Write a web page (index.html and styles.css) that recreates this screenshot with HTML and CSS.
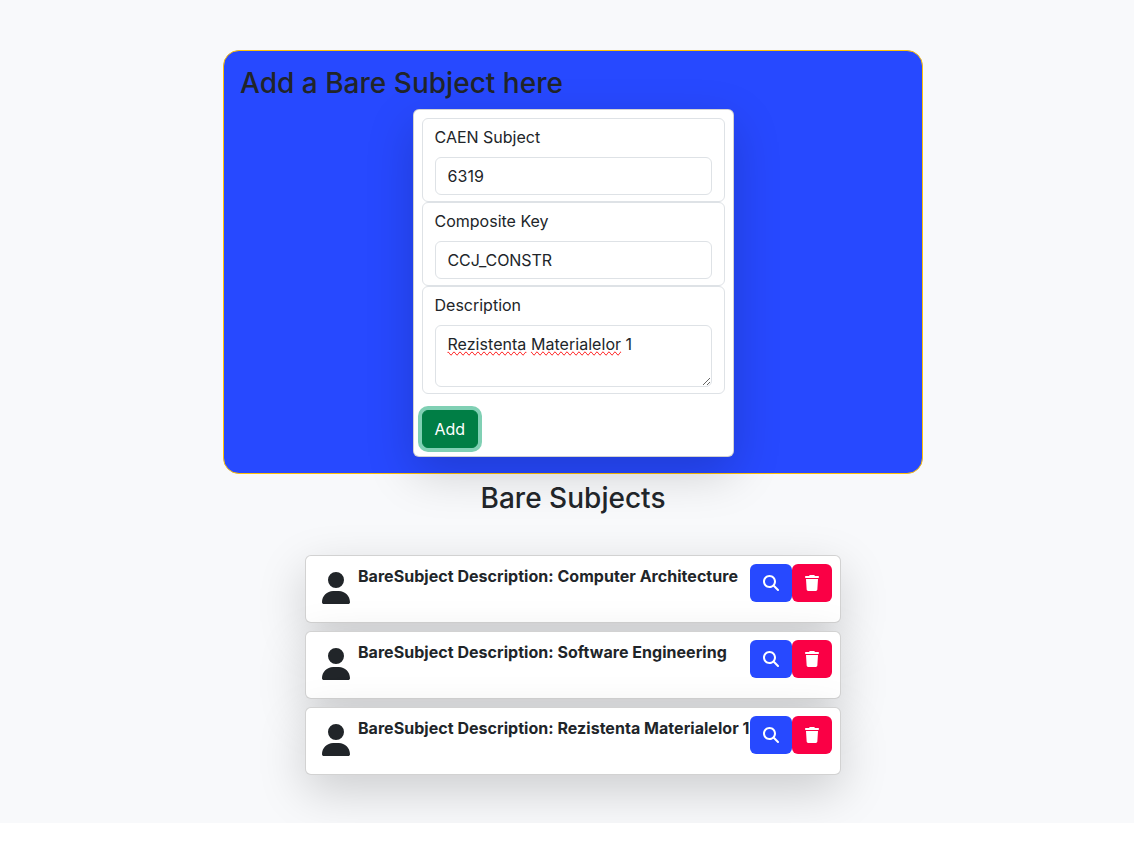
FILE: index.html
```
<!DOCTYPE html>
<html lang="en">
<head>
<meta charset="utf-8">
<title>Bare Subjects</title>
<link rel="stylesheet" href="styles.css">
</head>
<body>
<svg class="sprite" aria-hidden="true">
  <symbol id="user" viewBox="0 0 448 512"><path d="M224 256A128 128 0 1 0 224 0a128 128 0 1 0 0 256zm-45.700 48C79.800 304 0 383.800 0 482.300C0 498.700 13.300 512 29.700 512H418.300c16.400 0 29.700-13.300 29.700-29.700C448 383.800 368.200 304 269.700 304H178.300z"/></symbol>
  <symbol id="search" viewBox="0 0 512 512"><path d="M416 208c0 45.900-14.900 88.300-40 122.700L502.600 457.400c12.500 12.500 12.500 32.800 0 45.300s-32.800 12.500-45.300 0L330.700 376c-34.400 25.200-76.800 40-122.700 40C93.100 416 0 322.900 0 208S93.100 0 208 0S416 93.100 416 208zM208 352a144 144 0 1 0 0-288 144 144 0 1 0 0 288z"/></symbol>
  <symbol id="trash" viewBox="0 0 448 512"><path d="M135.200 17.700L128 32H32C14.300 32 0 46.300 0 64S14.300 96 32 96H416c17.700 0 32-14.300 32-32s-14.300-32-32-32H320l-7.200-14.300C307.400 6.800 296.300 0 284.200 0H163.800c-12.100 0-23.200 6.800-28.600 17.700zM416 128H32L53.200 467c1.600 25.300 22.600 45 47.900 45H346.900c25.300 0 46.300-19.700 47.900-45L416 128z"/></symbol>
</svg>
<main class="page">
  <section class="panel">
    <h3 class="title">Add a Bare Subject here</h3>
    <form class="form-card">
      <div class="field">
        <label class="label" for="caen">CAEN Subject</label>
        <input class="control" id="caen" value="6319">
      </div>
      <div class="field">
        <label class="label" for="key">Composite Key</label>
        <input class="control control-key" id="key" value="CCJ_CONSTR">
      </div>
      <div class="field">
        <div class="label">Description</div>
        <div class="control control-area" role="textbox" aria-multiline="true" contenteditable="true" spellcheck="false"><span class="misspelled">Rezistenta</span> <span class="misspelled">Materialelor</span> 1</div>
      </div>
      <button class="btn btn-add" type="button">Add</button>
    </form>
  </section>
  <h3 class="title list-title">Bare Subjects</h3>
  <section class="list">
    <article class="item">
      <svg class="avatar"><use href="#user"/></svg>
      <strong class="name">BareSubject Description: Computer Architecture</strong>
      <div class="actions">
        <button class="btn btn-view" aria-label="View"><svg class="icon"><use href="#search"/></svg></button>
        <button class="btn btn-delete" aria-label="Delete"><svg class="icon icon-narrow"><use href="#trash"/></svg></button>
      </div>
    </article>
    <article class="item">
      <svg class="avatar"><use href="#user"/></svg>
      <strong class="name">BareSubject Description: Software Engineering</strong>
      <div class="actions">
        <button class="btn btn-view" aria-label="View"><svg class="icon"><use href="#search"/></svg></button>
        <button class="btn btn-delete" aria-label="Delete"><svg class="icon icon-narrow"><use href="#trash"/></svg></button>
      </div>
    </article>
    <article class="item">
      <svg class="avatar"><use href="#user"/></svg>
      <strong class="name">BareSubject Description: Rezistenta Materialelor 1</strong>
      <div class="actions">
        <button class="btn btn-view" aria-label="View"><svg class="icon"><use href="#search"/></svg></button>
        <button class="btn btn-delete" aria-label="Delete"><svg class="icon icon-narrow"><use href="#trash"/></svg></button>
      </div>
    </article>
  </section>
</main>
</body>
</html>
```
FILE: styles.css
```
*, *::before, *::after { box-sizing: border-box; }

body {
  margin: 0;
  background: #fff;
  color: #212529;
  font: 400 16px/1.5 Inter, sans-serif;
}

.sprite { display: none; }

.page {
  display: flex;
  flex-direction: column;
  align-items: center;
  padding: 50px 0 48px 12px;
  background: #f8f9fb;
}

.title {
  margin: 0;
  font-size: 28px;
  font-weight: 500;
  line-height: 1.2;
  letter-spacing: .02px;
}

.panel {
  display: flex;
  flex-direction: column;
  gap: 8px;
  width: 700px;
  padding: 16px;
  border: 1px solid #ffc107;
  border-radius: 16px;
  background: #2749ff;
}

.form-card {
  align-self: center;
  width: 321px;
  padding: 8px;
  border: 1px solid rgba(0, 0, 0, .175);
  border-radius: 6px;
  background: #fff;
  box-shadow: 0 16px 48px rgba(0, 0, 0, .175);
}

.field {
  padding: 6px 12px;
  border: 1px solid #dee2e6;
  border-radius: 6px;
}

.label { display: block; margin-bottom: 8px; }

.control {
  display: block;
  width: 100%;
  height: 38px;
  padding: 6px 12px;
  border: 1px solid #dee2e6;
  border-radius: 6px;
  background: #fff;
  color: #212529;
  font: inherit;
  letter-spacing: .04px;
}

.control-key { letter-spacing: -.08px; }
.control-area { height: 62px; overflow: auto; resize: vertical; }

.misspelled {
  text-decoration: red wavy underline 1px;
  text-decoration-line: spelling-error;
}

.btn {
  height: 38px;
  padding: 6px 12px;
  border: 1px solid transparent;
  border-radius: 6px;
  color: #fff;
  font: inherit;
}

.btn-add {
  display: block;
  margin-top: 16px;
  background: #007e45;
  border-color: #007e45;
  box-shadow: 0 0 0 4px #80d0b4;
}

.list-title { margin: 8px 0 40px; }

.list {
  display: flex;
  flex-direction: column;
  gap: 8px;
  width: 536px;
}

.item {
  position: relative;
  display: flex;
  align-items: flex-start;
  height: 68px;
  padding: 8px;
  border: 1px solid rgba(0, 0, 0, .175);
  border-radius: 6px;
  background: #fff;
  box-shadow: 0 16px 48px rgba(0, 0, 0, .175);
}

.avatar { flex: none; width: 28px; height: 32px; margin: 8px; fill: currentColor; }
.name { flex: 1; min-width: 0; font-weight: 700; letter-spacing: .035px; white-space: nowrap; }
.actions { display: flex; flex: none; }
.btn-view { background: #2749ff; }
.btn-delete { background: #fa0045; }
.icon { display: block; width: 16px; height: 16px; fill: currentColor; }
.icon-narrow { width: 14px; }
```
